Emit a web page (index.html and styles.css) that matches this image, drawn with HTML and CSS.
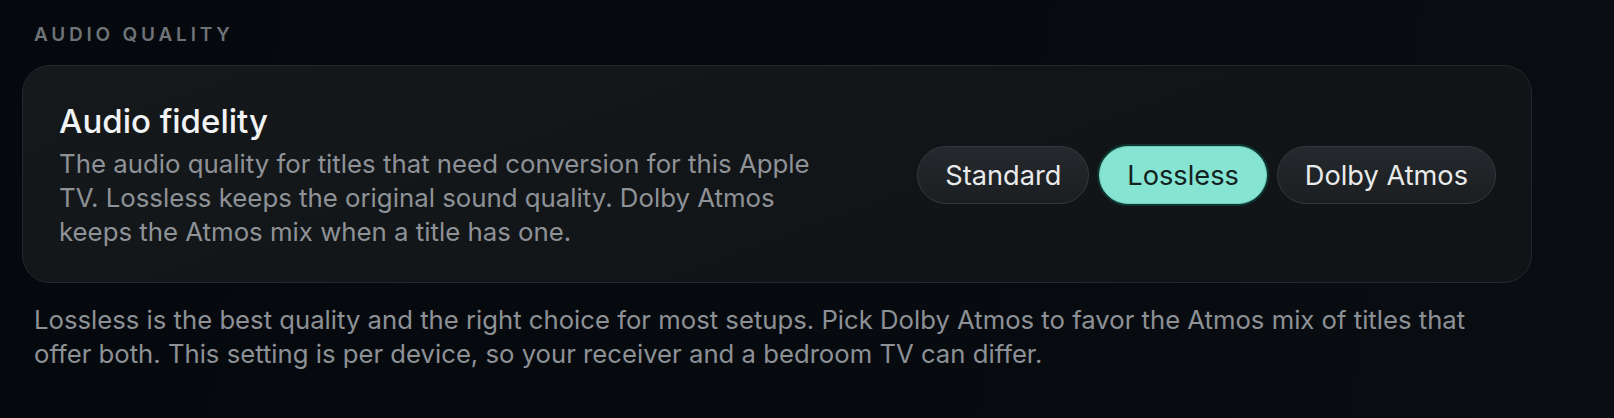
FILE: index.html
```html
<!DOCTYPE html>
<html lang="en">
<head>
<meta charset="utf-8">
<title>Audio quality</title>
<link rel="stylesheet" href="styles.css">
</head>
<body>
<section class="group">
  <h2 class="group-label">AUDIO QUALITY</h2>
  <div class="card">
    <div class="row-text">
      <h3 class="row-title">Audio fidelity</h3>
      <p class="row-desc">The audio quality for titles that need conversion for this Apple TV. Lossless keeps the original sound quality. Dolby Atmos keeps the Atmos mix when a title has one.</p>
    </div>
    <div class="segments" role="radiogroup">
      <button class="pill" role="radio" aria-checked="false">Standard</button>
      <button class="pill pill-on" role="radio" aria-checked="true">Lossless</button>
      <button class="pill" role="radio" aria-checked="false">Dolby Atmos</button>
    </div>
  </div>
  <p class="group-foot">Lossless is the best quality and the right choice for most setups. Pick Dolby Atmos to favor the Atmos mix of titles that offer both. This setting is per device, so your receiver and a bedroom TV can differ.</p>
</section>
</body>
</html>
```

FILE: styles.css
```css
html, body {
  margin: 0;
  height: 100%;
}
body {
  background: linear-gradient(100deg, #05090d 0%, #070b0f 60%, #0a0e12 100%);
  font-family: Inter, "Noto Sans", "Liberation Sans", sans-serif;
  color: #f2f3f4;
}
.group {
  padding: 23px 82px 0 22px;
}
.group-label {
  margin: 0 0 19px 12px;
  font-size: 19px;
  line-height: 23px;
  font-weight: 600;
  letter-spacing: 0.2em;
  color: #6e7378;
}
.card {
  display: flex;
  align-items: center;
  justify-content: space-between;
  gap: 40px;
  padding: 35px 35px 33px 36px;
  border: 1px solid #24282c;
  border-radius: 28px;
  background: linear-gradient(160deg, #15191c 0%, #121518 55%, #111417 100%);
}
.row-text {
  max-width: 790px;
}
.row-title {
  margin: 0 0 6px 0;
  font-size: 33px;
  line-height: 40px;
  font-weight: 500;
  color: #f1f2f3;
}
.row-desc {
  margin: 0;
  font-size: 25.8px;
  line-height: 34px;
  color: #8e9297;
}
.segments {
  display: flex;
  align-items: center;
  gap: 10px;
  flex-shrink: 0;
}
.pill {
  height: 58px;
  padding: 0 27px;
  border: 1px solid #34383c;
  border-radius: 29px;
  background: linear-gradient(180deg, #25292d 0%, #1b1e21 100%);
  color: #e9eaeb;
  font-family: inherit;
  font-size: 27.2px;
  font-weight: 400;
  cursor: pointer;
}
.pill-on {
  background: #86e4d2;
  border-color: #73cfbd;
  color: #13221f;
  box-shadow: 0 0 0 2px #0e3530;
}
.group-foot {
  max-width: 1465px;
  margin: 20px 0 0 12px;
  font-size: 25.7px;
  line-height: 33.5px;
  color: #8d9196;
}
```
